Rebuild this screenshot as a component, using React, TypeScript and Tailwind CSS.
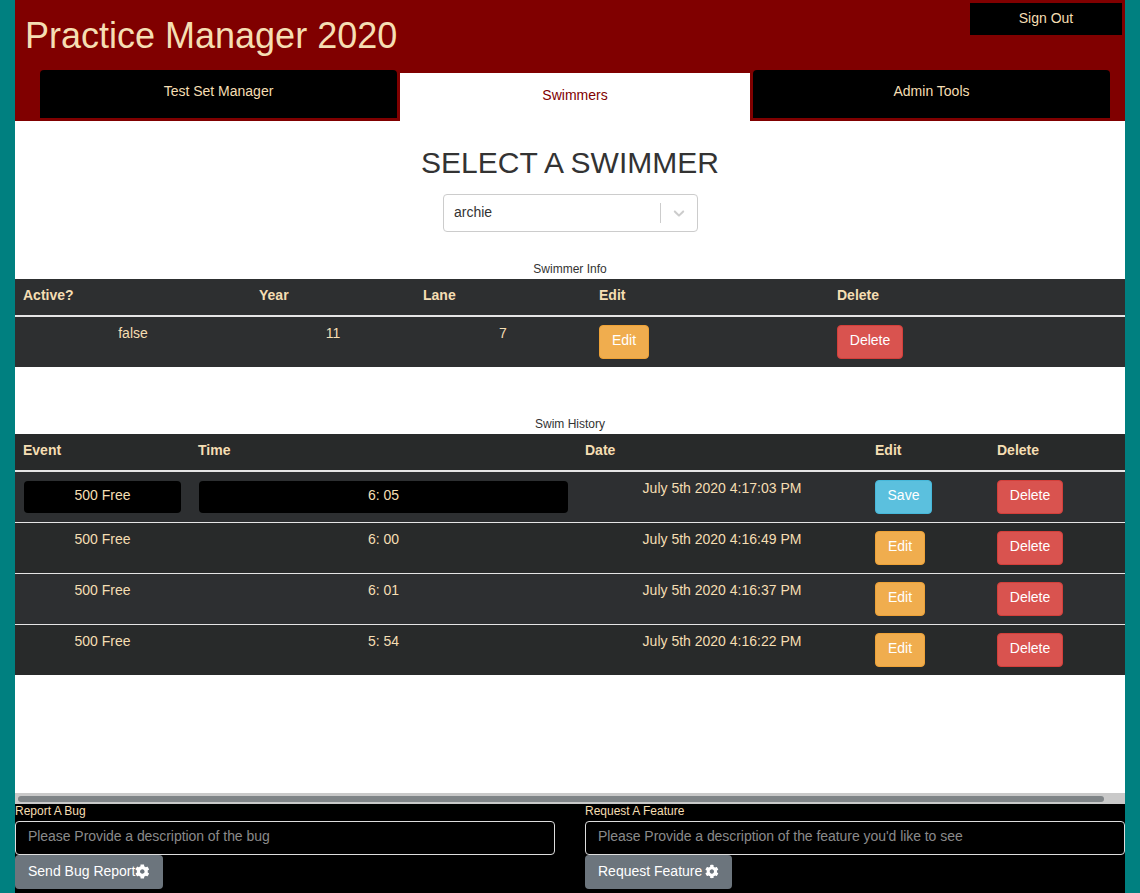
import { FaCog } from "react-icons/fa";

const history = [
  { time: "6: 00", date: "July 5th 2020 4:16:49 PM" },
  { time: "6: 01", date: "July 5th 2020 4:16:37 PM" },
  { time: "5: 54", date: "July 5th 2020 4:16:22 PM" },
];

function EditButton() {
  return (
    <button className="h-[34px] w-[50px] rounded border border-[#eea236] bg-[#f0ad4e] pb-[4px] text-sm text-white">
      Edit
    </button>
  );
}

function DeleteButton() {
  return (
    <button className="h-[34px] w-[66px] rounded border border-[#d43f3a] bg-[#d9534f] pb-[4px] text-sm text-white">
      Delete
    </button>
  );
}

function Tab({ label }: { label: string }) {
  return (
    <button className="h-[48px] w-[357px] rounded-t-[4px] bg-black pb-[7px] text-sm text-[#f5deb3]">
      {label}
    </button>
  );
}

function FooterForm({
  title,
  placeholder,
  button,
  width,
}: {
  title: string;
  placeholder: string;
  button: React.ReactNode;
  width: string;
}) {
  return (
    <div className="w-[540px]">
      <div className="h-[17px] text-xs leading-[14px] text-[#f5deb3]">{title}</div>
      <div className="flex h-[34px] items-center rounded border border-[#dddddd] bg-black px-3 pb-[4px] text-sm tracking-[-0.05px] text-[#8a8a8a]">
        {placeholder}
      </div>
      <button
        className={`flex h-[34px] items-center whitespace-nowrap rounded bg-[#6c757d] px-[13px] pb-[2px] text-sm text-white ${width}`}
      >
        {button}
      </button>
    </div>
  );
}

export default function App() {
  return (
    <div className="h-[893px] overflow-hidden bg-[#008080] px-[15px] font-['Liberation_Sans',sans-serif] text-sm">
      {/* Header */}
      <header className="h-[121px] bg-[#800000]">
        <div className="flex h-[70px] justify-between pl-[10px] pr-[3px]">
          <h1 className="pt-[15px] text-[36px] leading-[42px] text-[#f5deb3]">
            Practice Manager 2020
          </h1>
          <button className="mt-[3px] h-[32px] w-[152px] bg-black pb-[2px] text-sm text-[#f5deb3]">
            Sign Out
          </button>
        </div>
        <div className="flex pl-[25px]">
          <Tab label="Test Set Manager" />
          <div className="mx-[3px] mt-[3px] flex h-[48px] w-[350px] items-center justify-center bg-white pb-[4px] text-sm text-[#800000]">
            Swimmers
          </div>
          <Tab label="Admin Tools" />
        </div>
      </header>

      {/* Main */}
      <main className="h-[672px] bg-white text-center">
        <h2 className="pt-[24px] text-[30px] leading-[36px] text-[#333333]">SELECT A SWIMMER</h2>
        <div className="mx-auto mt-[13px] flex h-[38px] w-[255px] items-center rounded border border-[#cccccc] pl-[10px] text-left text-sm text-[#333333]">
          <span className="flex-1 pb-[2px] pl-[0.5px]">archie</span>
          <span className="h-[20px] w-px bg-[#cccccc]" />
          <svg viewBox="0 0 20 20" className="mx-[9px] h-[20px] w-[18px] fill-[#cccccc]">
            <path d="M4.516 7.548c0.436-0.446 1.043-0.481 1.576 0l3.908 3.747 3.908-3.747c0.533-0.481 1.141-0.446 1.574 0 0.436 0.445 0.408 1.197 0 1.615-0.406 0.418-4.695 4.502-4.695 4.502-0.217 0.223-0.502 0.335-0.787 0.335s-0.57-0.112-0.789-0.335c0 0-4.287-4.084-4.695-4.502s-0.436-1.17 0-1.615z" />
          </svg>
        </div>

        <div className="mt-[29px] h-[18px] text-xs leading-[16px] text-[#333333]">Swimmer Info</div>
        <table className="w-full table-fixed bg-[#2d2f30] text-[#f5deb3]">
          <colgroup>
            <col className="w-[236px]" />
            <col className="w-[164px]" />
            <col className="w-[176px]" />
            <col className="w-[238px]" />
            <col />
          </colgroup>
          <thead>
            <tr className="h-[37px] border-b-2 border-[#e5e5e5] text-left font-bold">
              <th className="px-2 pb-[5px]">Active?</th>
              <th className="px-2 pb-[5px]">Year</th>
              <th className="px-2 pb-[5px]">Lane</th>
              <th className="px-2 pb-[5px]">Edit</th>
              <th className="px-2 pb-[5px]">Delete</th>
            </tr>
          </thead>
          <tbody>
            <tr className="h-[51px]">
              <td className="pb-[19px] text-center">false</td>
              <td className="pb-[19px] text-center">11</td>
              <td className="pb-[19px] text-center">7</td>
              <td className="px-2 text-left">
                <EditButton />
              </td>
              <td className="px-2 text-left">
                <DeleteButton />
              </td>
            </tr>
          </tbody>
        </table>

        <div className="mt-[49px] h-[18px] text-xs leading-[16px] text-[#333333]">Swim History</div>
        <table className="w-full table-fixed bg-[#282a2a] text-[#f5deb3]">
          <colgroup>
            <col className="w-[175px]" />
            <col className="w-[387px]" />
            <col className="w-[290px]" />
            <col className="w-[122px]" />
            <col />
          </colgroup>
          <thead>
            <tr className="h-[37px] border-b-2 border-[#e5e5e5] text-left font-bold">
              <th className="px-2 pb-[5px]">Event</th>
              <th className="px-2 pb-[5px]">Time</th>
              <th className="px-2 pb-[5px]">Date</th>
              <th className="px-2 pb-[5px]">Edit</th>
              <th className="px-2 pb-[5px]">Delete</th>
            </tr>
          </thead>
          <tbody>
            <tr className="h-[51px] border-b border-[#e5e5e5] bg-[#2d2f31]">
              <td className="px-[9px]">
                <div className="flex h-[32px] items-center justify-center rounded bg-black pb-[4px]">500 Free</div>
              </td>
              <td className="px-[9px]">
                <div className="flex h-[32px] items-center justify-center rounded bg-black pb-[4px]">6: 05</div>
              </td>
              <td className="pb-[18px] text-center">July 5th 2020 4:17:03 PM</td>
              <td className="px-2 text-left">
                <button className="h-[34px] w-[57px] rounded border border-[#46b8da] bg-[#5bc0de] pb-[4px] text-sm text-white">
                  Save
                </button>
              </td>
              <td className="px-2 text-left">
                <DeleteButton />
              </td>
            </tr>
            {history.map((row, i) => (
              <tr
                key={row.date}
                className={`h-[51px] ${i < 2 ? "border-b border-[#e5e5e5]" : ""} ${i === 1 ? "bg-[#2d2f31]" : "bg-[#282a2a]"}`}
              >
                <td className="pb-[18px] text-center">500 Free</td>
                <td className="pb-[18px] text-center">{row.time}</td>
                <td className="pb-[18px] text-center">{row.date}</td>
                <td className="px-2 text-left">
                  <EditButton />
                </td>
                <td className="px-2 text-left">
                  <DeleteButton />
                </td>
              </tr>
            ))}
          </tbody>
        </table>
      </main>

      {/* Scrollbar */}
      <div className="flex h-[11px] items-center bg-[#c9c9c9] px-[3px]">
        <div className="h-[6px] w-[1086px] rounded-full bg-[#7f8487]" />
      </div>

      {/* Footer */}
      <footer className="flex h-[89px] justify-between bg-black">
        <FooterForm
          title="Report A Bug"
          placeholder="Please Provide a description of the bug"
          width="w-[148px]"
          button={
            <>
              Send Bug Report
              <FaCog className="text-[15px]" />
            </>
          }
        />
        <FooterForm
          title="Request A Feature"
          placeholder="Please Provide a description of the feature you'd like to see"
          width="w-[147px]"
          button={
            <>
              Request Feature
              <FaCog className="ml-[3px] text-[15px]" />
            </>
          }
        />
      </footer>
    </div>
  );
}
